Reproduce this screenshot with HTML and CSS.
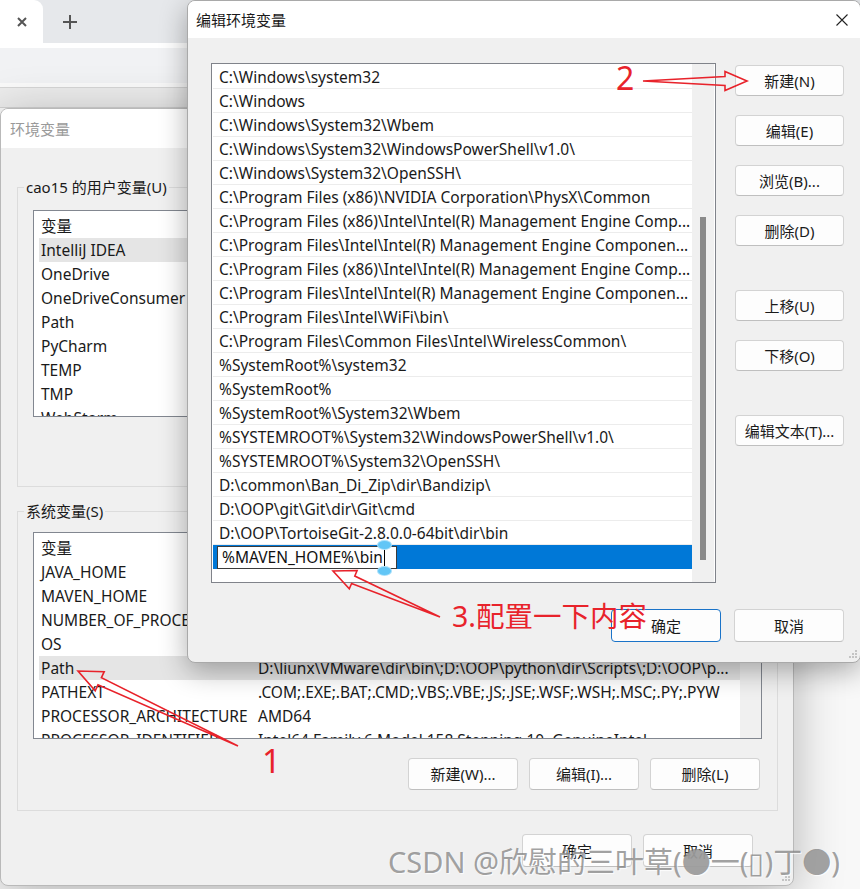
FILE: index.html
```html
<!DOCTYPE html>
<html lang="zh-CN">
<head>
<meta charset="utf-8">
<title>编辑环境变量</title>
<link rel="stylesheet" href="styles.css">
</head>
<body>
<div class="screen">
  <header class="browser">
    <div class="tabstrip">
      <div class="tab">
        <svg class="ico" width="10" height="10" viewBox="0 0 10 10"><path d="M1 1L9 9M9 1L1 9"/></svg>
      </div>
      <div class="newtab">
        <svg class="ico" width="14" height="14" viewBox="0 0 14 14"><path d="M7 0V14M0 7H14"/></svg>
      </div>
    </div>
    <div class="tab-foot"></div>
    <div class="toolbar"></div>
    <div class="bookmarks"></div>
    <div class="infobar"></div>
  </header>

  <section class="win env">
    <div class="titlebar"><span class="title">环境变量</span></div>
    <div class="env-body">
      <fieldset class="group user">
        <legend>cao15 的用户变量(U)</legend>
        <div class="listview">
          <div class="lv-rows">
            <div class="lv-row"><span class="c1">变量</span><span class="c2">值</span></div>
            <div class="lv-row hot"><span class="c1">IntelliJ IDEA</span><span class="c2">D:\OOP\IDEA\IntelliJ IDEA 2021.3\bin;</span></div>
            <div class="lv-row"><span class="c1">OneDrive</span><span class="c2">C:\Users\cao15\OneDrive</span></div>
            <div class="lv-row"><span class="c1">OneDriveConsumer</span><span class="c2">C:\Users\cao15\OneDrive</span></div>
            <div class="lv-row"><span class="c1">Path</span><span class="c2">C:\Users\cao15\AppData\Local\Microsoft\WindowsApps;</span></div>
            <div class="lv-row"><span class="c1">PyCharm</span><span class="c2">D:\OOP\PyCharm\bin;</span></div>
            <div class="lv-row"><span class="c1">TEMP</span><span class="c2">C:\Users\cao15\AppData\Local\Temp</span></div>
            <div class="lv-row"><span class="c1">TMP</span><span class="c2">C:\Users\cao15\AppData\Local\Temp</span></div>
            <div class="lv-row"><span class="c1">WebStorm</span><span class="c2">D:\OOP\WebStorm\bin;</span></div>
          </div>
          <div class="lv-scroll"></div>
        </div>
        <div class="btn-row">
          <button class="btn">新建(N)...</button>
          <button class="btn">编辑(E)...</button>
          <button class="btn">删除(D)</button>
        </div>
      </fieldset>

      <fieldset class="group sys">
        <legend>系统变量(S)</legend>
        <div class="listview">
          <div class="lv-rows">
            <div class="lv-row"><span class="c1">变量</span><span class="c2">值</span></div>
            <div class="lv-row"><span class="c1">JAVA_HOME</span><span class="c2">D:\OOP\Java\jdk1.8.0_281</span></div>
            <div class="lv-row"><span class="c1">MAVEN_HOME</span><span class="c2">D:\OOP\maven\apache-maven-3.8.4</span></div>
            <div class="lv-row"><span class="c1">NUMBER_OF_PROCESSORS</span><span class="c2">12</span></div>
            <div class="lv-row"><span class="c1">OS</span><span class="c2">Windows_NT</span></div>
            <div class="lv-row hot"><span class="c1">Path</span><span class="c2">D:\liunx\VMware\dir\bin\;D:\OOP\python\dir\Scripts\;D:\OOP\p...</span></div>
            <div class="lv-row"><span class="c1">PATHEXT</span><span class="c2">.COM;.EXE;.BAT;.CMD;.VBS;.VBE;.JS;.JSE;.WSF;.WSH;.MSC;.PY;.PYW</span></div>
            <div class="lv-row"><span class="c1">PROCESSOR_ARCHITECTURE</span><span class="c2">AMD64</span></div>
            <div class="lv-row"><span class="c1">PROCESSOR_IDENTIFIER</span><span class="c2">Intel64 Family 6 Model 158 Stepping 10, GenuineIntel</span></div>
          </div>
          <div class="lv-scroll"></div>
        </div>
        <div class="btn-row">
          <button class="btn">新建(W)...</button>
          <button class="btn">编辑(I)...</button>
          <button class="btn">删除(L)</button>
        </div>
      </fieldset>

      <div class="env-foot">
        <button class="btn foot">确定</button>
        <button class="btn foot">取消</button>
      </div>
    </div>
    <svg class="grip" width="8" height="8" viewBox="0 0 8 8"><rect x="6" y="0" width="2" height="2"/><rect x="3" y="3" width="2" height="2"/><rect x="6" y="3" width="2" height="2"/><rect x="0" y="6" width="2" height="2"/><rect x="3" y="6" width="2" height="2"/><rect x="6" y="6" width="2" height="2"/></svg>
  </section>

  <section class="win edit">
    <div class="titlebar">
      <span class="title">编辑环境变量</span>
      <svg class="close" width="12" height="12" viewBox="0 0 12 12"><path d="M0.5 0.5L11.5 11.5M11.5 0.5L0.5 11.5"/></svg>
    </div>
    <div class="edit-body">
      <div class="path-list">
        <div class="pl-rows">
          <div class="pl-row">C:\Windows\system32</div>
          <div class="pl-row">C:\Windows</div>
          <div class="pl-row">C:\Windows\System32\Wbem</div>
          <div class="pl-row">C:\Windows\System32\WindowsPowerShell\v1.0\</div>
          <div class="pl-row">C:\Windows\System32\OpenSSH\</div>
          <div class="pl-row">C:\Program Files (x86)\NVIDIA Corporation\PhysX\Common</div>
          <div class="pl-row">C:\Program Files (x86)\Intel\Intel(R) Management Engine Comp...</div>
          <div class="pl-row">C:\Program Files\Intel\Intel(R) Management Engine Componen...</div>
          <div class="pl-row">C:\Program Files (x86)\Intel\Intel(R) Management Engine Comp...</div>
          <div class="pl-row">C:\Program Files\Intel\Intel(R) Management Engine Componen...</div>
          <div class="pl-row">C:\Program Files\Intel\WiFi\bin\</div>
          <div class="pl-row">C:\Program Files\Common Files\Intel\WirelessCommon\</div>
          <div class="pl-row">%SystemRoot%\system32</div>
          <div class="pl-row">%SystemRoot%</div>
          <div class="pl-row">%SystemRoot%\System32\Wbem</div>
          <div class="pl-row">%SYSTEMROOT%\System32\WindowsPowerShell\v1.0\</div>
          <div class="pl-row">%SYSTEMROOT%\System32\OpenSSH\</div>
          <div class="pl-row">D:\common\Ban_Di_Zip\dir\Bandizip\</div>
          <div class="pl-row">D:\OOP\git\Git\dir\Git\cmd</div>
          <div class="pl-row">D:\OOP\TortoiseGit-2.8.0.0-64bit\dir\bin</div>
          <div class="pl-row sel">
            <div class="pl-edit">%MAVEN_HOME%\bin<span class="caret"></span></div>
          </div>
        </div>
        <div class="pl-scroll"><div class="pl-thumb"></div></div>
      </div>
      <div class="side-btns">
        <button class="btn">新建(N)</button>
        <button class="btn">编辑(E)</button>
        <button class="btn">浏览(B)...</button>
        <button class="btn">删除(D)</button>
        <button class="btn spaced">上移(U)</button>
        <button class="btn">下移(O)</button>
        <button class="btn spaced">编辑文本(T)...</button>
      </div>
    </div>
    <div class="edit-foot">
      <button class="btn foot default">确定</button>
      <button class="btn foot">取消</button>
    </div>
    <svg class="grip" width="8" height="8" viewBox="0 0 8 8"><rect x="6" y="0" width="2" height="2"/><rect x="3" y="3" width="2" height="2"/><rect x="6" y="3" width="2" height="2"/><rect x="0" y="6" width="2" height="2"/><rect x="3" y="6" width="2" height="2"/><rect x="6" y="6" width="2" height="2"/></svg>
  </section>

  <svg class="annot" width="860" height="889" viewBox="0 0 860 889">
    <polygon points="643,81 725,85.5 725,90.5 747,81 725,71.5 725,76.5"/>
    <polygon points="440,617 354.8,576.0 357.1,570.5 333,571 349.3,588.9 351.6,583.4"/>
    <polygon points="238,746 101.4,677.6 104.2,671.7 78,671 95.2,690.7 98.0,684.8"/>
  </svg>
  <span class="note n1">1</span>
  <span class="note n2">2</span>
  <span class="note n3">3.配置一下内容</span>
  <div class="watermark">CSDN @欣慰的三叶草(●一(▯)丁●)</div>
</div>
</body>
</html>
```

FILE: styles.css
```css
* { box-sizing: border-box; }
html, body { margin: 0; padding: 0; }
body {
  font-family: "Noto Sans", "Noto Sans CJK SC", sans-serif;
  font-size: 15px;
  color: #1a1a1a;
  background: #f7f7f7;
}
.screen {
  position: relative;
  width: 860px;
  height: 889px;
  overflow: hidden;
  background: #f8f8f8;
}

/* browser chrome behind the windows */
.browser { height: 108px; display: flex; flex-direction: column; }
.tabstrip { height: 43px; background: #e6e8eb; display: flex; flex: none; }
.tab {
  width: 43px;
  background: #fff;
  border-top-right-radius: 9px;
  display: flex;
  align-items: center;
  justify-content: center;
}
.newtab { width: 54px; display: flex; align-items: center; justify-content: center; }
.ico path { stroke: #555; stroke-width: 2; fill: none; }
.tab-foot { height: 5px; background: #fff; flex: none; }
.toolbar { height: 35px; background: #f1f2f4; flex: none; }
.bookmarks { height: 5px; background: #fafafa; border-bottom: 1px solid #d6d6d6; flex: none; }
.infobar { flex: 1; background: #ececec; border-bottom: 1px solid #d3d3d3; }

/* windows */
.win {
  position: absolute;
  background: #f0f0f0;
  border: 1px solid #b9b9b9;
  border-radius: 8px;
  overflow: hidden;
  display: flex;
  flex-direction: column;
}
.titlebar {
  background: #fff;
  display: flex;
  align-items: center;
  flex: none;
}
.grip { position: absolute; right: 3px; bottom: 4px; }
.grip rect { fill: #c4c4c4; }

.env {
  left: 0;
  top: 108px;
  width: 794px;
  height: 778px;
  box-shadow: 0 10px 50px rgba(0, 0, 0, 0.28);
}
.env .titlebar { height: 39px; padding-left: 9px; }
.env .title { color: #9a9a9a; }
.env-body { padding: 29px 15px 0 16px; }

.group {
  margin: 0;
  min-width: 0;
  border: 1px solid #dcdcdc;
  padding: 13px 15px 18px 15px;
}
.group legend { padding: 0 2px; margin-left: -9px; line-height: 20px; }
.group.sys { margin-top: 14px; padding-top: 11px; padding-bottom: 20px; }

.listview {
  height: 207px;
  border: 1px solid #828790;
  background: #fff;
  display: flex;
  overflow: hidden;
  font-size: 15.5px;
}
.lv-rows { flex: 1; min-width: 0; padding: 3px 0 0 5px; }
.lv-row { height: 24px; display: flex; align-items: center; white-space: nowrap; line-height: 20px; }
.lv-row .c1 { width: 217px; flex: none; padding-left: 2px; overflow: hidden; }
.lv-row .c2 { padding-left: 2px; overflow: hidden; }
.lv-row.hot { background: #e5e5e5; }
.lv-scroll { width: 21px; flex: none; background: #f0f0f0; }

.btn-row { display: flex; justify-content: flex-end; gap: 11px; margin-top: 19px; padding-right: 2px; }

.btn {
  font-family: inherit;
  font-size: 15px;
  color: #1a1a1a;
  width: 109px;
  height: 31px;
  padding: 0;
  background: #fdfdfd;
  border: 1px solid #d3d3d3;
  border-bottom-color: #bfbfbf;
  border-radius: 4px;
  display: flex;
  align-items: center;
  justify-content: center;
  line-height: 20px;
}
.btn-row .btn { width: 110px; height: 32px; }
.btn.foot { width: 110px; height: 33px; }
.btn.default { border: 1px solid #1a73c8; }

.env-foot { display: flex; justify-content: flex-end; gap: 11px; margin-top: 23px; padding-right: 25px; }

/* edit dialog */
.edit {
  left: 187px;
  top: 0;
  width: 674px;
  height: 663px;
  border-color: #a9a9a9;
  box-shadow: 0 8px 28px rgba(0, 0, 0, 0.32);
}
.edit .titlebar { height: 37px; padding: 0 12px 0 8px; justify-content: space-between; }
.close path { stroke: #222; stroke-width: 1.1; fill: none; }

.edit-body {
  display: grid;
  grid-template-columns: 505px 109px;
  column-gap: 19px;
  align-items: start;
  padding: 25px 0 0 23px;
}
.path-list {
  height: 520px;
  border: 1px solid #80838a;
  background: #fff;
  display: flex;
  font-size: 15.5px;
}
.pl-rows { flex: 1; min-width: 0; padding: 1px 0 0 1px; }
.pl-row {
  height: 24px;
  border-bottom: 1px solid #ececec;
  padding: 1px 0 0 6px;
  line-height: 22px;
  white-space: nowrap;
  overflow: hidden;
}
.pl-row.sel {
  background: #0078d7;
  border-bottom-color: #0078d7;
  padding: 1px 0 0 4px;
  overflow: visible;
}
.pl-edit {
  width: 180px;
  height: 23px;
  border: 1px solid #3b3b3b;
  background: #fff;
  padding-left: 4px;
  line-height: 21px;
  color: #111;
  white-space: nowrap;
}
.caret {
  position: relative;
  display: inline-block;
  width: 1px;
  height: 18px;
  margin-left: 1px;
  background: #000;
  vertical-align: -4px;
}
.caret::before, .caret::after {
  content: "";
  position: absolute;
  left: -6px;
  width: 13px;
  height: 8px;
  border-radius: 50%;
  background: #62c6f6;
  box-shadow: 0 0 0 1px #a9e0fb;
}
.caret::before { top: -8px; }
.caret::after { bottom: -8px; }
.pl-scroll { width: 22px; flex: none; background: #f0f0f0; margin-right: 1px; }
.pl-thumb { width: 6px; height: 343px; margin: 153px 0 0 8px; background: #8a8a8a; }

.side-btns { display: flex; flex-direction: column; gap: 19px; padding-top: 2px; }
.side-btns .spaced { margin-top: 25px; }

.edit-foot { display: flex; justify-content: flex-end; gap: 13px; margin-top: 26px; padding-right: 16px; }

/* annotations */
.annot { position: absolute; left: 0; top: 0; pointer-events: none; }
.annot polygon { fill: none; stroke: #e8232b; stroke-width: 1.6; stroke-linejoin: miter; }
.note {
  position: absolute;
  color: #e8232b;
  line-height: 1;
  white-space: nowrap;
}
.n1 { left: 262px; top: 744px; font-size: 33px; }
.n2 { left: 616px; top: 62px; font-size: 32px; }
.n3 { left: 452px; top: 602px; font-size: 28.5px; }

.watermark {
  position: absolute;
  left: 388px;
  top: 847px;
  font-size: 29px;
  line-height: 1;
  white-space: nowrap;
  color: rgba(120, 120, 120, 0.7);
  text-shadow: 1px 1px 1px rgba(255, 255, 255, 0.8);
}
```
